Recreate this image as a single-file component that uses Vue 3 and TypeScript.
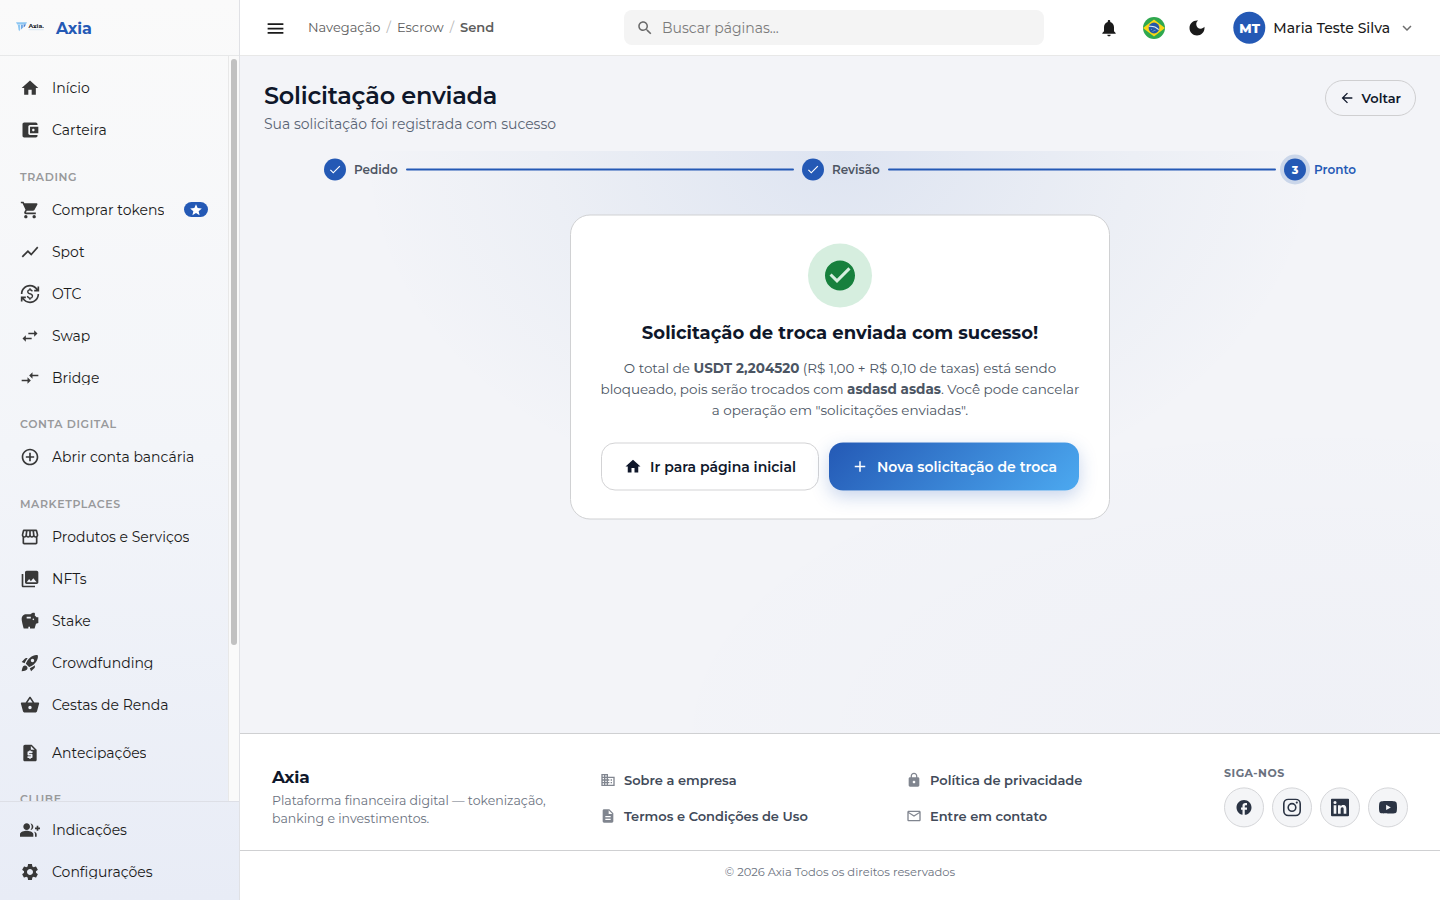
<script setup lang="ts">
import { h, type FunctionalComponent } from 'vue'

const icons = {
  home: 'M10 20v-6h4v6h5v-8h3L12 3 2 12h3v8z',
  wallet: 'M21 18v1c0 1.1-.9 2-2 2H5c-1.11 0-2-.9-2-2V5c0-1.1.89-2 2-2h14c1.1 0 2 .9 2 2v1h-9c-1.11 0-2 .9-2 2v8c0 1.1.89 2 2 2h9zm-9-2h10V8H12v8zm4-2.5c-.83 0-1.5-.67-1.5-1.5s.67-1.5 1.5-1.5 1.5.67 1.5 1.5-.67 1.5-1.5 1.5z',
  cart: 'M7 18c-1.1 0-1.99.9-1.99 2S5.9 22 7 22s2-.9 2-2-.9-2-2-2zM1 2v2h2l3.6 7.59-1.35 2.45c-.16.28-.25.61-.25.96 0 1.1.9 2 2 2h12v-2H7.42c-.14 0-.25-.11-.25-.25l.03-.12.9-1.63h7.45c.75 0 1.41-.41 1.75-1.03l3.58-6.49c.08-.14.12-.31.12-.48 0-.55-.45-1-1-1H5.21l-.94-2H1zm16 16c-1.1 0-1.99.9-1.99 2s.89 2 1.99 2 2-.9 2-2-.9-2-2-2z',
  chart: 'm3.5 18.49 6-6.01 4 4L22 6.92l-1.41-1.41-7.09 7.97-4-4L2 16.99z',
  otc: 'M12.89 11.1c-1.78-.59-2.64-.96-2.64-1.9 0-1.02 1.11-1.39 1.81-1.39 1.31 0 1.79.99 1.9 1.34l1.58-.67c-.15-.44-.82-1.91-2.66-2.23V5h-1.75v1.26c-2.6.56-2.62 2.85-2.62 2.96 0 2.27 2.25 2.91 3.35 3.31 1.58.56 2.28 1.07 2.28 2.03 0 1.13-1.05 1.61-1.98 1.61-1.82 0-2.34-1.87-2.4-2.09l-1.66.67c.63 2.19 2.28 2.78 2.9 2.96V19h1.75v-1.24c.52-.09 3.02-.59 3.02-3.22.01-1.39-.6-2.61-3-3.44zM3 21H1v-6h6v2H4.52c1.61 2.41 4.36 4 7.48 4 4.97 0 9-4.03 9-9h2c0 6.08-4.92 11-11 11-3.72 0-7.01-1.85-9-4.67V21zm-2-9C1 5.92 5.92 1 12 1c3.72 0 7.01 1.85 9 4.67V3h2v6h-6V7h2.48C17.87 4.59 15.12 3 12 3c-4.97 0-9 4.03-9 9H1z',
  swap: 'M6.99 11 3 15l3.99 4v-3H14v-2H6.99v-3zM21 9l-3.99-4v3H10v2h7.01v3L21 9z',
  bridge: 'M9.01 14H2v2h7.01v3L13 15l-3.99-4v3zm5.98-1v-3H22V8h-7.01V5L11 9l3.99 4z',
  addCircle: 'M13 7h-2v4H7v2h4v4h2v-4h4v-2h-4V7zm-1-5C6.48 2 2 6.48 2 12s4.48 10 10 10 10-4.48 10-10S17.52 2 12 2zm0 18c-4.41 0-8-3.59-8-8s3.59-8 8-8 8 3.59 8 8-3.59 8-8 8z',
  store: 'M21.9 8.89l-1.05-4.37c-.22-.9-1-1.52-1.91-1.52H5.05c-.9 0-1.69.63-1.9 1.52L2.1 8.89c-.24 1.02-.02 2.06.62 2.88.08.11.19.19.28.29V19c0 1.1.9 2 2 2h14c1.1 0 2-.9 2-2v-6.94c.09-.09.2-.18.28-.28.64-.82.87-1.87.62-2.89zm-2.99-3.9l1.05 4.37c.1.42.01.84-.25 1.17-.14.18-.44.47-.94.47-.61 0-1.14-.49-1.21-1.14L16.98 5l1.93-.01zM13 5h1.96l.54 4.52c.05.39-.07.78-.33 1.07-.22.26-.54.41-.95.41-.67 0-1.22-.59-1.22-1.31V5zM8.49 9.52L9.04 5H11v4.69c0 .72-.55 1.31-1.29 1.31-.34 0-.65-.15-.89-.41-.25-.29-.37-.68-.33-1.07zm-4.45-.16L5.05 5h1.97l-.58 4.86c-.08.65-.6 1.14-1.21 1.14-.49 0-.8-.29-.93-.47-.27-.32-.36-.75-.26-1.17zM5 19v-6.03c.08.01.15.03.23.03.87 0 1.66-.36 2.24-.95.6.6 1.4.95 2.31.95.87 0 1.65-.36 2.23-.93.59.57 1.39.93 2.29.93.84 0 1.64-.35 2.24-.95.58.59 1.37.95 2.24.95.08 0 .15-.02.23-.03V19H5z',
  photos: 'M22 16V4c0-1.1-.9-2-2-2H8c-1.1 0-2 .9-2 2v12c0 1.1.9 2 2 2h12c1.1 0 2-.9 2-2zm-11-4 2.03 2.71L16 11l4 5H8l3-4zM2 6v14c0 1.1.9 2 2 2h14v-2H4V6H2z',
  savings: 'm19.83 7.5-2.27-2.27c.07-.42.18-.81.32-1.15.08-.18.12-.37.12-.58 0-.83-.67-1.5-1.5-1.5-1.64 0-3.09.79-4 2h-5C4.46 4 2 6.46 2 9.5S4.5 21 4.5 21H10v-2h2v2h5.5l1.68-5.59 2.82-.94V7.5h-2.17zM13 9H8V7h5v2zm3 2c-.55 0-1-.45-1-1s.45-1 1-1 1 .45 1 1-.45 1-1 1z',
  rocket: 'M9.19 6.35c-2.04 2.29-3.44 5.58-3.57 5.89L2 10.69l4.05-4.05c.47-.47 1.15-.68 1.81-.55l1.33.26zM11.17 17s3.74-1.55 5.89-3.7c5.4-5.4 4.5-9.62 4.21-10.57-.95-.3-5.17-1.19-10.57 4.21C8.55 9.09 7 12.83 7 12.83L11.17 17zm6.48-2.19c-2.29 2.04-5.58 3.44-5.89 3.57L13.31 22l4.05-4.05c.47-.47.68-1.15.55-1.81l-.26-1.33zM9 18c0 .83-.34 1.58-.88 2.12C6.94 21.3 2 22 2 22s.7-4.94 1.88-6.12C4.42 15.34 5.17 15 6 15c1.66 0 3 1.34 3 3zm4-9c0-1.1.9-2 2-2s2 .9 2 2-.9 2-2 2-2-.9-2-2z',
  basket: 'M17.21 9l-4.38-6.56c-.19-.28-.51-.42-.83-.42-.32 0-.64.14-.83.43L6.79 9H2c-.55 0-1 .45-1 1 0 .09.01.18.04.27l2.54 9.27c.23.84 1 1.46 1.92 1.46h13c.92 0 1.69-.62 1.93-1.46l2.54-9.27L23 10c0-.55-.45-1-1-1h-4.79zM9 9l3-4.4L15 9H9zm3 8c-1.1 0-2-.9-2-2s.9-2 2-2 2 .9 2 2-.9 2-2 2z',
  quote: 'M14 2H6c-1.1 0-1.99.9-1.99 2L4 20c0 1.1.89 2 1.99 2H18c1.1 0 2-.9 2-2V8l-6-6zm1 10h-4v1h3c.55 0 1 .45 1 1v3c0 .55-.45 1-1 1h-1v1h-2v-1H9v-2h4v-1h-3c-.55 0-1-.45-1-1v-3c0-.55.45-1 1-1h1V9h2v1h2v2zm-2-4V3.5L17.5 8H13z',
  groupAdd: 'M22 9V7h-2v2h-2v2h2v2h2v-2h2V9h-2zM8 12c2.21 0 4-1.79 4-4s-1.79-4-4-4-4 1.79-4 4 1.79 4 4 4zm0 1c-2.67 0-8 1.34-8 4v3h16v-3c0-2.66-5.33-4-8-4zm4.51-8.95C13.43 5.11 14 6.49 14 8s-.57 2.89-1.49 3.95C14.47 11.7 16 10.04 16 8s-1.53-3.7-3.49-3.95zm4.02 9.78C17.42 14.66 18 15.7 18 17v3h2v-3c0-1.45-1.59-2.51-3.47-3.17z',
  settings: 'M19.14 12.94c.04-.3.06-.61.06-.94 0-.32-.02-.64-.07-.94l2.03-1.58c.18-.14.23-.41.12-.61l-1.92-3.32c-.12-.22-.37-.29-.59-.22l-2.39.96c-.5-.38-1.03-.7-1.62-.94l-.36-2.54c-.04-.24-.24-.41-.48-.41h-3.84c-.24 0-.43.17-.47.41l-.36 2.54c-.59.24-1.13.57-1.62.94l-2.39-.96c-.22-.08-.47 0-.59.22L2.74 8.87c-.12.21-.08.47.12.61l2.03 1.58c-.05.3-.09.63-.09.94s.02.64.07.94l-2.03 1.58c-.18.14-.23.41-.12.61l1.92 3.32c.12.22.37.29.59.22l2.39-.96c.5.38 1.03.7 1.62.94l.36 2.54c.05.24.24.41.48.41h3.84c.24 0 .44-.17.47-.41l.36-2.54c.59-.24 1.13-.56 1.62-.94l2.39.96c.22.08.47 0 .59-.22l1.92-3.32c.12-.22.07-.47-.12-.61l-2.01-1.58zM12 15.6c-1.98 0-3.6-1.62-3.6-3.6s1.62-3.6 3.6-3.6 3.6 1.62 3.6 3.6-1.62 3.6-3.6 3.6z',
  menu: 'M3 18h18v-2H3v2zm0-5h18v-2H3v2zm0-7v2h18V6H3z',
  search: 'M15.5 14h-.79l-.28-.27C15.41 12.59 16 11.11 16 9.5 16 5.91 13.09 3 9.5 3S3 5.91 3 9.5 5.91 16 9.5 16c1.61 0 3.09-.59 4.23-1.57l.27.28v.79l5 4.99L20.49 19l-4.99-5zm-6 0C7.01 14 5 11.99 5 9.5S7.01 5 9.5 5 14 7.01 14 9.5 11.99 14 9.5 14z',
  bell: 'M12 22c1.1 0 2-.9 2-2h-4c0 1.1.89 2 2 2zm6-6v-5c0-3.07-1.64-5.64-4.5-6.32V4c0-.83-.67-1.5-1.5-1.5s-1.5.67-1.5 1.5v.68C7.63 5.36 6 7.92 6 11v5l-2 2v1h16v-1l-2-2z',
  moon: 'M12 3c-4.97 0-9 4.03-9 9s4.03 9 9 9 9-4.03 9-9c0-.46-.04-.92-.1-1.36-.98 1.37-2.58 2.26-4.4 2.26-2.98 0-5.4-2.42-5.4-5.4 0-1.81.89-3.42 2.26-4.4C12.92 3.04 12.46 3 12 3z',
  chevron: 'M7.41 8.59 12 13.17l4.59-4.58L18 10l-6 6-6-6 1.41-1.41z',
  back: 'M20 11H7.83l5.59-5.59L12 4l-8 8 8 8 1.41-1.41L7.83 13H20v-2z',
  check: 'M9 16.17 4.83 12l-1.42 1.41L9 19 21 7l-1.41-1.41z',
  checkCircle: 'M12 2C6.48 2 2 6.48 2 12s4.48 10 10 10 10-4.48 10-10S17.52 2 12 2zm-2 15-5-5 1.41-1.41L10 14.17l7.59-7.59L19 8l-9 9z',
  add: 'M19 13h-6v6h-2v-6H5v-2h6V5h2v6h6v2z',
  star: 'M12 17.27 18.18 21l-1.64-7.03L22 9.24l-7.19-.61L12 2 9.19 8.63 2 9.24l5.46 4.73L5.82 21z',
  business: 'M12 7V3H2v18h20V7H12zM6 19H4v-2h2v2zm0-4H4v-2h2v2zm0-4H4V9h2v2zm0-4H4V5h2v2zm4 12H8v-2h2v2zm0-4H8v-2h2v2zm0-4H8V9h2v2zm0-4H8V5h2v2zm10 12h-8v-2h2v-2h-2v-2h2v-2h-2V9h8v10zm-2-8h-2v2h2v-2zm0 4h-2v2h2v-2z',
  document: 'M14 2H6c-1.1 0-1.99.9-1.99 2L4 20c0 1.1.89 2 1.99 2H18c1.1 0 2-.9 2-2V8l-6-6zm2 16H8v-2h8v2zm0-4H8v-2h8v2zm-3-5V3.5L18.5 9H13z',
  lock: 'M18 8h-1V6c0-2.76-2.24-5-5-5S7 3.24 7 6v2H6c-1.1 0-2 .9-2 2v10c0 1.1.9 2 2 2h12c1.1 0 2-.9 2-2V10c0-1.1-.9-2-2-2zm-6 9c-1.1 0-2-.9-2-2s.9-2 2-2 2 .9 2 2-.9 2-2 2zm3.1-9H8.9V6c0-1.71 1.39-3.1 3.1-3.1 1.71 0 3.1 1.39 3.1 3.1v2z',
  mail: 'M22 6c0-1.1-.9-2-2-2H4c-1.1 0-2 .9-2 2v12c0 1.1.9 2 2 2h16c1.1 0 2-.9 2-2V6zm-2 0-8 5-8-5h16zm0 12H4V8l8 5 8-5v10z',
  facebook: 'M22 12c0-5.52-4.48-10-10-10S2 6.48 2 12c0 4.84 3.44 8.87 8 9.8V15H8v-3h2V9.5C10 7.57 11.57 6 13.5 6H16v3h-2c-.55 0-1 .45-1 1v2h3v3h-3v6.95c5.05-.5 9-4.76 9-9.95z',
} as const

type IconName = keyof typeof icons

const Icon: FunctionalComponent<{ name: IconName; size?: number }> = (props) =>
  h(
    'svg',
    { width: props.size ?? 20, height: props.size ?? 20, viewBox: '0 0 24 24', fill: 'currentColor', 'aria-hidden': 'true' },
    [h('path', { d: icons[props.name] })],
  )
Icon.props = ['name', 'size']

interface NavItem { label: string; icon: IconName; starred?: boolean; spaced?: boolean }
interface NavGroup { title?: string; items: NavItem[] }

const groups: NavGroup[] = [
  { items: [{ label: 'Início', icon: 'home' }, { label: 'Carteira', icon: 'wallet' }] },
  {
    title: 'Trading',
    items: [
      { label: 'Comprar tokens', icon: 'cart', starred: true },
      { label: 'Spot', icon: 'chart' },
      { label: 'OTC', icon: 'otc' },
      { label: 'Swap', icon: 'swap' },
      { label: 'Bridge', icon: 'bridge' },
    ],
  },
  { title: 'Conta digital', items: [{ label: 'Abrir conta bancária', icon: 'addCircle' }] },
  {
    title: 'Marketplaces',
    items: [
      { label: 'Produtos e Serviços', icon: 'store' },
      { label: 'NFTs', icon: 'photos' },
      { label: 'Stake', icon: 'savings' },
      { label: 'Crowdfunding', icon: 'rocket' },
      { label: 'Cestas de Renda', icon: 'basket' },
      { label: 'Antecipações', icon: 'quote', spaced: true },
    ],
  },
  { title: 'Clube', items: [] },
]

const bottomItems: NavItem[] = [
  { label: 'Indicações', icon: 'groupAdd' },
  { label: 'Configurações', icon: 'settings' },
]

const companyLinks: NavItem[] = [
  { label: 'Sobre a empresa', icon: 'business' },
  { label: 'Termos e Condições de Uso', icon: 'document' },
]
const legalLinks: NavItem[] = [
  { label: 'Política de privacidade', icon: 'lock' },
  { label: 'Entre em contato', icon: 'mail' },
]
</script>

<template>
  <div class="app">
    <aside class="sidebar">
      <div class="brand">
        <svg class="brand-logo" width="28" height="10" viewBox="0 0 28 10">
          <path d="M0 .3h11L9.800 2.400H1.200z" fill="#8cc6f2" />
          <path d="M1.800 2.800h2.400V7.400l-.9 1.900-.7-1.400z" fill="#8cc6f2" />
          <path d="M5 2.800h1.900v3L5 7.600z" fill="#6fa9e6" />
          <path d="M7.600 2.400h2.300L8.800 4.600 7.600 5.400z" fill="#4d80d3" />
          <text x="12.400" y="5.700" class="logo-text" textLength="15.400" lengthAdjust="spacingAndGlyphs">Axia.</text>
          <path d="M12.600 7.700h15" stroke="#cbe2f5" stroke-width=".7" />
        </svg>
        <span class="brand-name">Axia</span>
      </div>
      <div class="nav-scroll">
        <nav class="nav">
          <section v-for="(group, i) in groups" :key="i">
            <h6 v-if="group.title" class="nav-title">{{ group.title }}</h6>
            <a v-for="item in group.items" :key="item.label" class="nav-item" :class="{ spaced: item.spaced }">
              <Icon :name="item.icon" />
              <span class="nav-label">{{ item.label }}</span>
              <span v-if="item.starred" class="star-pill"><Icon name="star" :size="14" /></span>
            </a>
          </section>
        </nav>
        <div class="scroll-track"><div class="scroll-thumb"></div></div>
      </div>
      <nav class="nav-bottom">
        <a v-for="item in bottomItems" :key="item.label" class="nav-item">
          <Icon :name="item.icon" />
          <span class="nav-label">{{ item.label }}</span>
        </a>
      </nav>
    </aside>

    <div class="body">
      <header class="topbar">
        <div class="topbar-left">
          <Icon name="menu" :size="21" class="menu" />
          <div class="crumbs">
            <span>Navegação</span><i>/</i><span>Escrow</span><i>/</i><b>Send</b>
          </div>
        </div>
        <div class="search">
          <Icon name="search" :size="18" />
          <span>Buscar páginas...</span>
        </div>
        <div class="topbar-right">
          <Icon name="bell" />
          <svg class="flag" width="22" height="22" viewBox="0 0 22 22">
            <defs><clipPath id="flag-clip"><circle cx="11" cy="11" r="11" /></clipPath></defs>
            <g clip-path="url(#flag-clip)">
              <rect width="22" height="22" fill="#2fa84f" />
              <path d="M11 2.400 22 11l-11 8.600L0 11z" fill="#f9d616" />
              <circle cx="11" cy="11" r="5.400" fill="#2458a6" />
              <path d="M6.200 9.400c3.400-.4 6.800.6 9.500 3.200" fill="none" stroke="#dfeaf5" stroke-width="1.100" />
              <path d="M8 12.400h1M10.500 13.500h2M9.500 14.600h1" stroke="#9fbbe0" stroke-width=".6" />
            </g>
          </svg>
          <Icon name="moon" />
          <div class="user">
            <span class="avatar">MT</span>
            <span class="user-name">Maria Teste Silva</span>
            <Icon name="chevron" :size="18" class="chevron" />
          </div>
        </div>
      </header>

      <main class="main">
        <div class="page-head">
          <div>
            <h1>Solicitação enviada</h1>
            <p class="subtitle">Sua solicitação foi registrada com sucesso</p>
          </div>
          <button class="back"><Icon name="back" :size="16" /><span>Voltar</span></button>
        </div>

        <div class="flow">
          <div class="stepper">
            <div class="step"><span class="dot"><Icon name="check" :size="14" /></span><span class="step-label s1">Pedido</span></div>
            <div class="bar"></div>
            <div class="step"><span class="dot"><Icon name="check" :size="14" /></span><span class="step-label s2">Revisão</span></div>
            <div class="bar"></div>
            <div class="step active"><span class="dot">3</span><span class="step-label s3">Pronto</span></div>
          </div>

          <section class="card">
            <div class="success"><Icon name="checkCircle" :size="36" /></div>
            <h2>Solicitação de troca enviada com sucesso!</h2>
            <p class="message">
              <span>O total de <b>USDT 2,204520</b> (R$ 1,00 + R$ 0,10 de taxas) está sendo</span>
              <span>bloqueado, pois serão trocados com <b>asdasd asdas</b>. Você pode cancelar</span>
              <span>a operação em "solicitações enviadas".</span>
            </p>
            <div class="actions">
              <button class="btn outline"><Icon name="home" :size="18" /><span>Ir para página inicial</span></button>
              <button class="btn primary"><Icon name="add" :size="18" /><span>Nova solicitação de troca</span></button>
            </div>
          </section>
        </div>
      </main>

      <footer class="footer">
        <div class="footer-main">
          <div class="about">
            <h3>Axia</h3>
            <p><span>Plataforma financeira digital — tokenização,</span><br /><span>banking e investimentos.</span></p>
          </div>
          <div class="links">
            <a v-for="l in companyLinks" :key="l.label"><Icon :name="l.icon" :size="16" /><span>{{ l.label }}</span></a>
          </div>
          <div class="links">
            <a v-for="l in legalLinks" :key="l.label"><Icon :name="l.icon" :size="16" /><span>{{ l.label }}</span></a>
          </div>
          <div class="social">
            <h6>SIGA-NOS</h6>
            <div class="social-row">
              <a><Icon name="facebook" :size="18" /></a>
              <a>
                <svg width="18" height="18" viewBox="0 0 18 18" fill="none" stroke="currentColor" stroke-width="1.600">
                  <rect x=".8" y=".8" width="16.400" height="16.400" rx="4.500" />
                  <circle cx="9" cy="9" r="3.800" />
                  <circle cx="13.800" cy="4.200" r="1.100" fill="currentColor" stroke="none" />
                </svg>
              </a>
              <a>
                <svg width="18" height="18" viewBox="0 0 24 24" fill="currentColor" fill-rule="evenodd">
                  <path d="M1.500 0h21A1.500 1.500 0 0 1 24 1.500v21a1.500 1.500 0 0 1-1.500 1.500h-21A1.500 1.500 0 0 1 0 22.500v-21A1.500 1.500 0 0 1 1.500 0zM3.560 9v11.450h3.560V9zM5.340 3.300a2.060 2.060 0 1 0 0 4.130 2.060 2.060 0 0 0 0-4.130zM9.350 9v11.450h3.560v-5.670c0-1.500.3-2.950 2.140-2.950 1.810 0 1.850 1.700 1.850 3.040v5.580h3.550v-6.280c0-3.090-.67-5.460-4.260-5.460-1.730 0-2.900.95-3.370 1.850h-.05V9z" />
                </svg>
              </a>
              <a>
                <svg width="18" height="18" viewBox="0 0 24 24" fill="currentColor">
                  <path d="M23.500 6.200a3 3 0 0 0-2.100-2.100C19.500 3.600 12 3.600 12 3.600s-7.500 0-9.400.5A3 3 0 0 0 .5 6.200C0 8.100 0 12 0 12s0 3.900.5 5.800a3 3 0 0 0 2.100 2.100c1.900.5 9.400.5 9.400.5s7.500 0 9.400-.5a3 3 0 0 0 2.100-2.100c.5-1.900.5-5.800.5-5.800s0-3.900-.5-5.800zM9.500 15.600V8.400l6.300 3.600z" />
                </svg>
              </a>
            </div>
          </div>
        </div>
        <div class="copyright"><span>© 2026 Axia Todos os direitos reservados</span></div>
      </footer>
    </div>
  </div>
</template>

<style>
html, body { margin: 0; overflow: hidden; }
</style>

<style scoped>
.app {
  display: flex;
  width: 1440px;
  height: 900px;
  overflow: hidden;
  font-family: Montserrat, Inter, "Open Sans", sans-serif;
  font-size: 14px;
  color: #1a1a1a;
}
.app *, .app *::before { box-sizing: border-box; }
h1, h2, h3, h6, p { margin: 0; }
svg { display: block; flex: none; }
button { font: inherit; color: inherit; background: none; border: 0; padding: 0; }
span, b { white-space: nowrap; }

/* Sidebar */
.sidebar {
  flex: none;
  width: 240px;
  display: flex;
  flex-direction: column;
  border-right: 1px solid #e0e1e5;
  background: linear-gradient(180deg, #fafafa 0%, #f3f5f9 50%, #e8ecf6 100%);
}
.brand {
  flex: none;
  height: 56px;
  display: flex;
  align-items: center;
  gap: 12px;
  padding-left: 16px;
  border-bottom: 1px solid #e7e8e9;
}
.brand-logo { margin-bottom: 1px; }
.logo-text { font: 700 6px Montserrat, Inter, sans-serif; fill: #23262d; }
.brand-name { margin-top: 2px; font-size: 16px; line-height: 20px; font-weight: 700; color: #2459b5; }
.nav-scroll { flex: 1; min-height: 0; display: flex; overflow: hidden; }
.nav { flex: 1; padding: 11px 20px 0; overflow: hidden; }
.nav-title {
  height: 37.6px;
  padding-top: 19.6px;
  font-size: 11px;
  line-height: 13px;
  font-weight: 600;
  letter-spacing: .6px;
  text-transform: uppercase;
  color: #98999b;
}
.nav-item { display: flex; align-items: center; height: 42px; color: #383838; }
.nav-item.spaced { margin-top: 6px; }
.nav-label { margin-left: 12px; color: #1a1a1a; line-height: 14px; overflow: hidden; }
.star-pill {
  margin-left: auto;
  display: grid;
  place-items: center;
  width: 24px;
  height: 15px;
  border-radius: 8px;
  background: #2459b5;
  color: #fff;
}
.scroll-track { flex: none; width: 11px; padding: 3px 2px; background: #fafafa; border-left: 1px solid #e8e8e8; }
.scroll-thumb { width: 6px; height: 586px; border-radius: 3px; background: #c1c1c1; }
.nav-bottom { flex: none; height: 99px; padding: 7px 20px 0; border-top: 1px solid #dddfe6; }

/* Top bar */
.body { flex: 1; min-width: 0; display: flex; flex-direction: column; }
.topbar {
  flex: none;
  height: 56px;
  display: grid;
  grid-template-columns: 383.5px 420px 1fr;
  align-items: center;
  background: #fff;
  border-bottom: 1px solid #e8e8e8;
}
.topbar-left { display: flex; align-items: center; padding-left: 25.4px; }
.menu { margin-top: 1px; }
.crumbs { display: flex; margin: 0 0 1px 21.6px; font-size: 13px; line-height: 16px; color: #5c5c5c; }
.crumbs i { width: 16.4px; text-align: center; font-style: normal; color: #b5b5b5; }
.crumbs b { font-weight: 600; }
.search {
  height: 35px;
  display: flex;
  align-items: center;
  gap: 8px;
  padding-left: 12.5px;
  border-radius: 8px;
  background: #f4f4f4;
  color: #7b7b7b;
}
.search svg { color: #6a6a6a; }
.topbar-right { display: flex; align-items: center; justify-content: flex-end; padding-right: 24px; }
.flag { margin: 0 22.5px 0 23.5px; }
.user { display: flex; align-items: center; margin-left: 26px; }
.avatar {
  display: grid;
  place-items: center;
  width: 32px;
  height: 32px;
  border-radius: 50%;
  background: #2459b5;
  color: #fff;
  font-size: 13px;
  font-weight: 800;
  transform: translate(.3px, -.3px);
}
.user-name { width: 116.7px; margin-left: 8px; font-weight: 500; }
.chevron { margin-left: 8px; color: #6e6e6e; }

/* Page */
.main { flex: 1; min-height: 0; display: flex; flex-direction: column; background: #f3f4f8; }
.page-head { flex: none; height: 95px; display: flex; justify-content: space-between; align-items: flex-start; padding: 24px 24px 0; }
h1 { font-size: 24px; line-height: 32px; font-weight: 600; letter-spacing: -.24px; color: #0f172a; }
.subtitle { margin-top: 2px; line-height: 20px; color: #5a6474; }
.back {
  width: 91.5px;
  height: 36px;
  display: flex;
  align-items: center;
  justify-content: center;
  gap: 6px;
  border: 1px solid #cfcfd1;
  border-radius: 18px;
  font-size: 13px;
  font-weight: 600;
  color: #0f172a;
}
.flow {
  flex: 1;
  padding: 7px 84px 0;
  background:
    radial-gradient(ellipse 480px 360px at 50% 0, rgba(36, 89, 181, .1), rgba(60, 110, 170, .04) 60%, transparent),
    radial-gradient(ellipse 700px 330px at 90% 100%, rgba(36, 60, 160, .02), transparent);
}
.stepper { display: flex; align-items: center; gap: 8px; height: 24px; transform: translateY(-.5px); }
.step { display: flex; align-items: center; gap: 8px; }
.dot {
  width: 22px;
  height: 22px;
  display: grid;
  place-items: center;
  border-radius: 50%;
  background: #2459b5;
  color: #fff;
  font-size: 11px;
  font-weight: 800;
}
.active .dot { box-shadow: 0 0 0 4px #cad6ea; }
.step-label { font-size: 12px; line-height: 16px; font-weight: 600; color: #4d5563; }
.active .step-label { color: #2459b5; }
.s1 { width: 43.7px; }
.s2 { width: 47.7px; }
.s3 { width: 42px; }
.bar { flex: 1; height: 2px; border-radius: 1px; background: #2459b5; }
.card {
  width: 540px;
  height: 305px;
  margin: 33px auto 0;
  padding: 28px 30px 0;
  border: 1px solid #d0d1d3;
  border-radius: 20px;
  background: #fff;
  text-align: center;
  transform: translateY(-.5px);
}
.success {
  width: 64px;
  height: 64px;
  margin: 0 auto;
  display: grid;
  place-items: center;
  border-radius: 50%;
  background: #d6eedf;
  color: #17803d;
}
h2 { margin-top: 13px; font-size: 18px; line-height: 24px; font-weight: 700; color: #0f172a; white-space: nowrap; }
.message { margin: 13px -5px 0; font-size: 13.5px; line-height: 21px; color: #4b5563; }
.message > span { display: block; }
.actions { display: flex; gap: 10px; margin-top: 22px; }
.btn { display: flex; align-items: center; justify-content: center; gap: 8px; height: 48px; border-radius: 14px; font-weight: 600; }
.outline { width: 218px; border: 1px solid #d3d3d5; color: #0f172a; }
.primary {
  width: 250px;
  color: #fff;
  background: linear-gradient(135deg, #2459b5 0%, #4ca9f0 100%);
  box-shadow: 0 6px 18px rgba(36, 89, 181, .25);
}

/* Footer */
.footer { flex: none; height: 167px; background: #fff; border-top: 1px solid #cfd0d2; }
.footer-main { height: 117px; display: grid; grid-template-columns: 328px 306px 318px 1fr; padding: 0 32px; border-bottom: 1px solid #cfd0d2; }
.about { padding-top: 31px; }
.about h3 { font-size: 17px; line-height: 24px; font-weight: 700; letter-spacing: -.17px; color: #0f172a; }
.about p { margin-top: 3px; font-size: 12.5px; line-height: 18px; color: #6b7280; }
.links { display: flex; flex-direction: column; gap: 16px; padding-top: 36px; }
.links a { display: flex; align-items: center; gap: 8px; height: 20px; font-size: 13px; font-weight: 600; color: #414a59; }
.links svg { color: #80858f; }
.social h6 { padding-top: 32px; font-size: 11px; line-height: 14px; font-weight: 700; letter-spacing: .5px; color: #6b7280; }
.social-row { display: flex; gap: 8px; margin-top: 7px; transform: translateY(.4px); }
.social-row a {
  width: 40px;
  height: 40px;
  display: grid;
  place-items: center;
  border: 1px solid #d5d6d9;
  border-radius: 50%;
  background: #f4f5f7;
  color: #2b3444;
}
.copyright { height: 42px; display: grid; place-items: center; font-size: 11.5px; color: #6b7280; }
</style>
